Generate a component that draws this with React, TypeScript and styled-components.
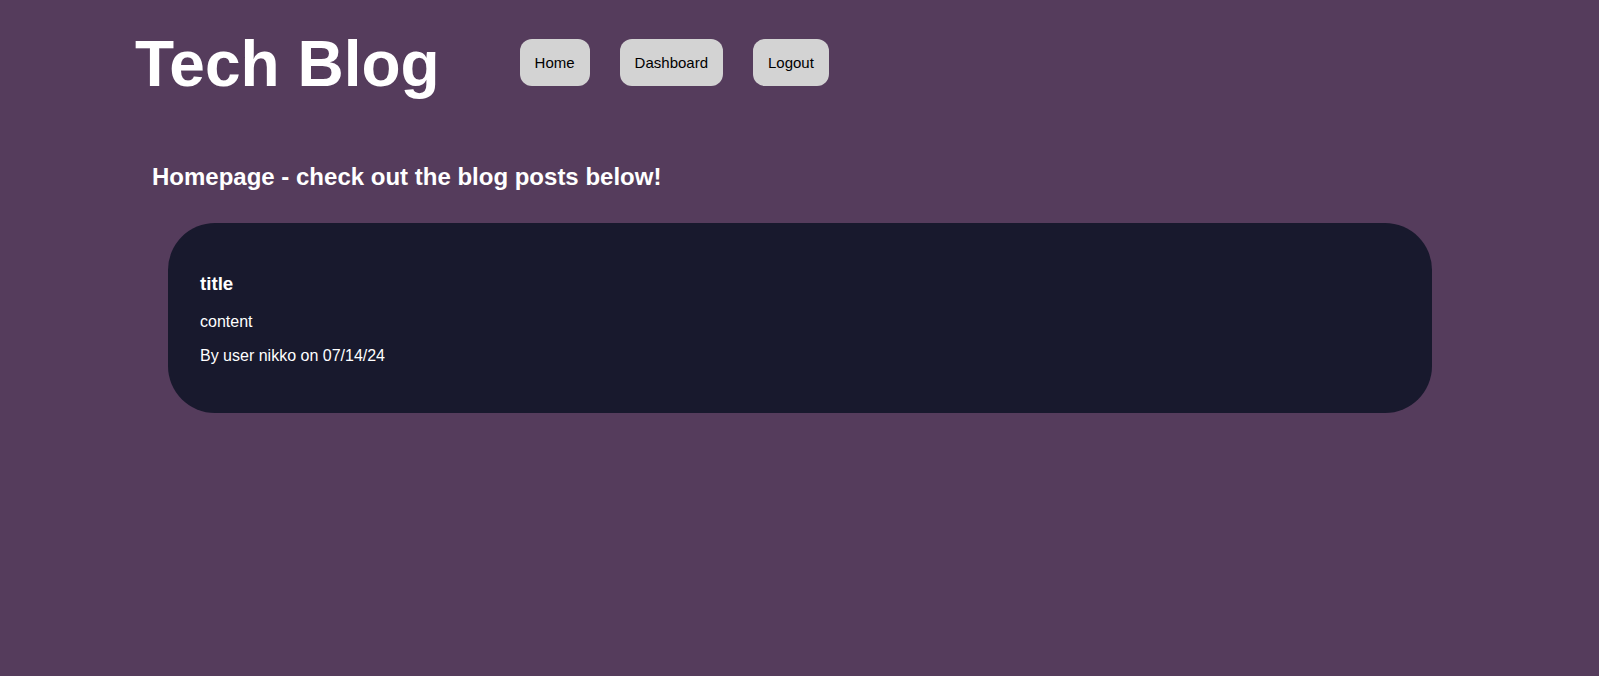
import React from "react";
import styled, { createGlobalStyle } from "styled-components";

const GlobalStyle = createGlobalStyle`
  html, body {
    margin: 0;
    padding: 0;
    background: #553c5c;
  }
  body {
    font-family: "Liberation Sans", Arial, Helvetica, sans-serif;
    color: #ffffff;
    min-height: 676px;
  }
`;

const Page = styled.div`
  min-height: 676px;
  background: #553c5c;
  display: flex;
  flex-direction: column;
`;

const Header = styled.header`
  display: flex;
  align-items: center;
  padding: 27px 0 0 135px;
`;

const Logo = styled.h1`
  margin: 0;
  font-size: 64px;
  line-height: 74px;
  font-weight: 700;
  color: #ffffff;
`;

const Nav = styled.nav`
  display: flex;
  gap: 30px;
  margin-left: 80px;
  margin-top: -3px;
`;

const NavButton = styled.button`
  font-family: "Liberation Sans", Arial, Helvetica, sans-serif;
  font-size: 15px;
  line-height: 17px;
  padding: 15px;
  border: none;
  border-radius: 12px;
  background: #d3d3d3;
  color: #000000;
  cursor: pointer;
`;

const Main = styled.main`
  display: flex;
  flex-direction: column;
`;

const PageTitle = styled.h2`
  margin: 62px 0 0 152px;
  font-size: 24px;
  line-height: 28px;
  font-weight: 700;
  color: #ffffff;
`;

const PostCard = styled.article`
  margin: 32px 0 0 168px;
  width: 1264px;
  box-sizing: border-box;
  padding: 31px 32px 32px;
  border-radius: 47px;
  background: #18192d;
`;

const PostTitle = styled.h3`
  margin: 18.72px 0;
  font-size: 18.72px;
  font-weight: 700;
  color: #ffffff;
`;

const PostText = styled.p`
  margin: 16px 0;
  font-size: 16px;
  color: #ffffff;
`;

const posts = [
  { title: "title", content: "content", user: "nikko", date: "07/14/24" },
];

export default function App() {
  return (
    <>
      <GlobalStyle />
      <Page>
        <Header>
          <Logo>Tech Blog</Logo>
          <Nav>
            <NavButton>Home</NavButton>
            <NavButton>Dashboard</NavButton>
            <NavButton>Logout</NavButton>
          </Nav>
        </Header>
        <Main>
          <PageTitle>Homepage - check out the blog posts below!</PageTitle>
          {posts.map((p, i) => (
            <PostCard key={i}>
              <PostTitle>{p.title}</PostTitle>
              <PostText>{p.content}</PostText>
              <PostText>
                By user {p.user} on {p.date}
              </PostText>
            </PostCard>
          ))}
        </Main>
      </Page>
    </>
  );
}
